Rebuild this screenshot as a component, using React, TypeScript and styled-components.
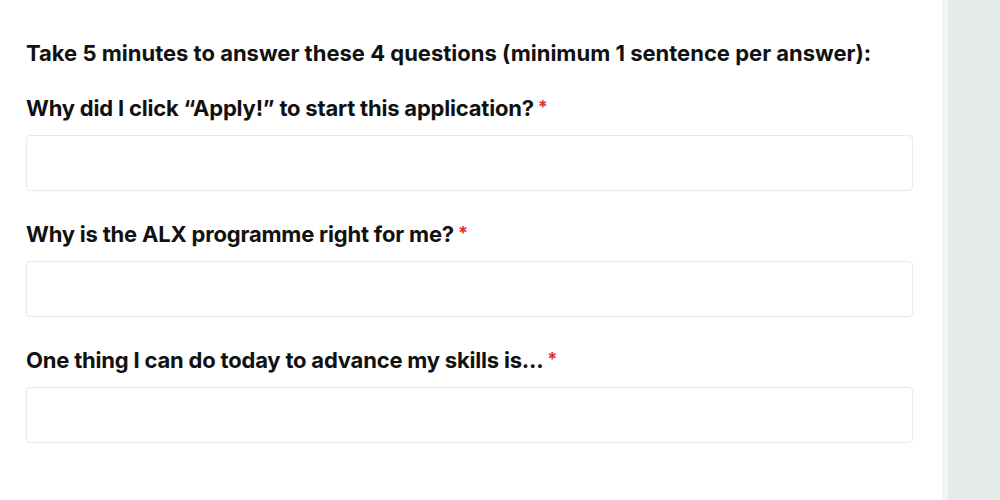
import React from "react";
import styled, { createGlobalStyle } from "styled-components";

const Global = createGlobalStyle`
  html, body { margin: 0; padding: 0; background: #ffffff; }
  body { font-family: Inter, "Noto Sans", sans-serif; color: #111111; }
`;

const Page = styled.div`
  display: flex;
  width: 1000px;
  height: 500px;
  overflow: hidden;
`;

const Main = styled.main`
  width: 942px;
  flex: none;
  background: #ffffff;
  padding: 40px 29px 0 26px;
  box-sizing: border-box;
`;

const Divider = styled.div`
  width: 6px;
  flex: none;
  background: #f2f5f4;
`;

const Side = styled.aside`
  flex: 1;
  background: #e5eaea;
`;

const Intro = styled.p`
  margin: 0 0 29px;
  font-size: 22px;
  line-height: 26px;
  font-weight: 700;
  letter-spacing: 0;
`;

const Field = styled.div`
  display: flex;
  flex-direction: column;
  gap: 14px;
  margin-bottom: 30px;
`;

const Label = styled.label`
  display: block;
  height: 26px;
  font-size: 22px;
  line-height: 26px;
  font-weight: 700;
  letter-spacing: -0.2px;
`;

const Req = styled.span`
  color: #e03131;
  margin-left: 4px;
  font-size: 18px;
  line-height: 1;
  vertical-align: 3px;
`;

const Input = styled.input`
  box-sizing: border-box;
  height: 56px;
  width: 100%;
  border: 1px solid #e9e9ec;
  border-radius: 4px;
  background: #fff;
  outline: none;
`;

const questions = [
  "Why did I click \u201CApply!\u201D to start this application?",
  "Why is the ALX programme right for me?",
  "One thing I can do today to advance my skills is...",
];

export default function App() {
  return (
    <>
      <Global />
      <Page>
        <Main>
          <Intro>Take 5 minutes to answer these 4 questions (minimum 1 sentence per answer):</Intro>
          {questions.map((q) => (
            <Field key={q}>
              <Label>
                {q}
                <Req>*</Req>
              </Label>
              <Input type="text" />
            </Field>
          ))}
        </Main>
        <Divider />
        <Side />
      </Page>
    </>
  );
}
